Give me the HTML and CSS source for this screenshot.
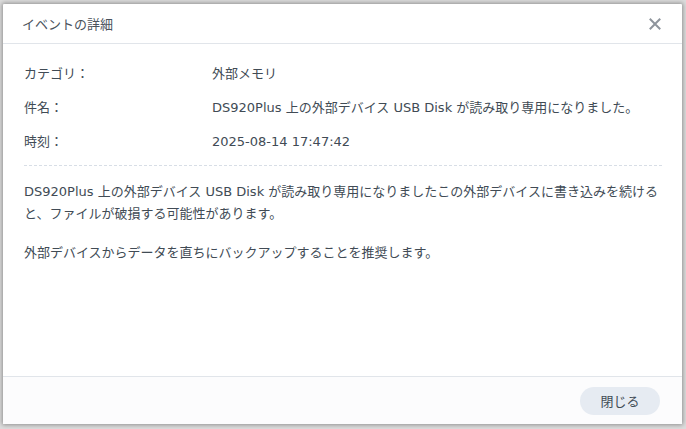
FILE: index.html
```html
<!DOCTYPE html>
<html lang="ja">
<head>
<meta charset="utf-8">
<link rel="stylesheet" href="styles.css">
</head>
<body>
<div class="dialog">
  <div class="header">
    <div class="title">イベントの詳細</div>
    <div class="close" aria-label="close">
      <svg width="12" height="12" viewBox="0 0 12 12"><path d="M1.5 1.5 L10.5 10.5 M10.5 1.5 L1.5 10.5" stroke="#8e949c" stroke-width="2" stroke-linecap="square" fill="none"/></svg>
    </div>
  </div>
  <div class="body">
    <div class="rows">
      <div class="row"><div class="label">カテゴリ：</div><div class="value">外部メモリ</div></div>
      <div class="row"><div class="label">件名：</div><div class="value">DS920Plus 上の外部デバイス USB Disk が読み取り専用になりました。</div></div>
      <div class="row"><div class="label">時刻：</div><div class="value">2025-08-14 17:47:42</div></div>
    </div>
    <div class="desc">
      <p>DS920Plus 上の外部デバイス USB Disk が読み取り専用になりましたこの外部デバイスに書き込みを続けると、ファイルが破損する可能性があります。</p>
      <p>外部デバイスからデータを直ちにバックアップすることを推奨します。</p>
    </div>
  </div>
  <div class="footer">
    <button class="btn">閉じる</button>
  </div>
</div>
</body>
</html>
```
FILE: styles.css
```css
html, body {
  margin: 0;
  padding: 0;
}
body {
  width: 686px;
  height: 429px;
  background: #dcdcdc;
  font-family: "DejaVu Sans", "Noto Sans CJK JP", sans-serif;
  font-size: 13px;
  color: #414b55;
  overflow: hidden;
  padding: 4px 4px 5px 3px;
  box-sizing: border-box;
}
.dialog {
  width: 679px;
  height: 420px;
  background: #ffffff;
  box-shadow: 0 0 4px 1px rgba(0,0,0,0.35);
  display: flex;
  flex-direction: column;
  border-radius: 1px;
}
.header {
  height: 39px;
  border-bottom: 1px solid #e1e5ea;
  display: flex;
  align-items: center;
  justify-content: space-between;
  padding: 0 21px 0 19px;
  flex: none;
}
.title {
  font-size: 13px;
  color: #4a525c;
}
.close {
  width: 12px;
  height: 12px;
  display: flex;
}
.body {
  flex: 1;
  padding: 13px 18px 0 21px;
}
.row {
  display: flex;
  height: 34px;
  line-height: 34px;
}
.label {
  width: 188px;
  flex: none;
}
.rows {
  border-bottom: 1px dashed #d8dee6;
  margin-right: 2px;
  padding-bottom: 6px;
}
.desc {
  padding-top: 15px;
  line-height: 22px;
}
.desc p {
  margin: 0 0 17px 0;
}
.footer {
  height: 47px;
  border-top: 1px solid #e1e5ea;
  background: #fcfcfd;
  display: flex;
  align-items: center;
  justify-content: flex-end;
  padding: 0 22px 0 0;
  flex: none;
}
.btn {
  width: 80px;
  height: 28px;
  border: none;
  border-radius: 14px;
  background: #e6ebf2;
  font-family: inherit;
  font-size: 13px;
  color: #414b55;
  padding: 0;
}
```
